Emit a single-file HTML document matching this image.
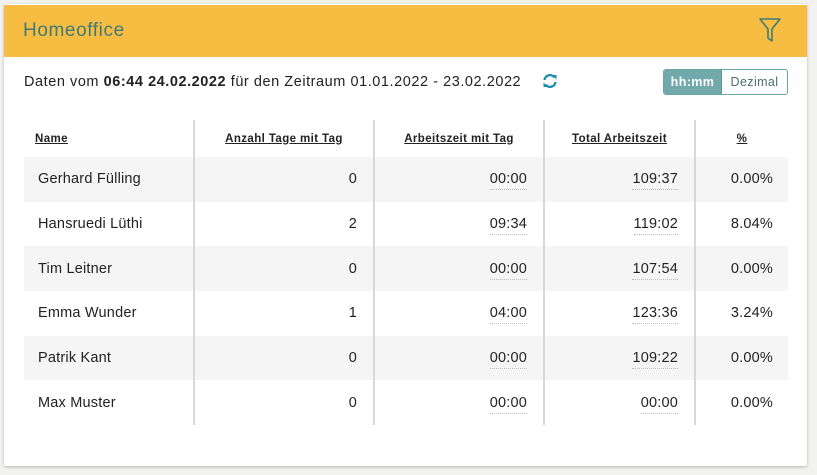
<!DOCTYPE html>
<html><head><meta charset="utf-8"><style>
*{box-sizing:border-box;margin:0;padding:0}
body{width:817px;height:475px;background:#f2f2f0;font-family:"Liberation Sans",sans-serif;color:#333;position:relative;overflow:hidden}
.card{position:absolute;left:4px;top:4px;width:803px;height:462px;background:#fff;box-shadow:0 1px 3px rgba(0,0,0,.25);border-radius:2px}
.hdr{position:absolute;left:0;top:1px;width:803px;height:52px;background:#f7bd43}
.hdr .t{position:absolute;left:19px;top:15px;font-size:19px;color:#3e7b76;letter-spacing:0.6px}
.info{position:absolute;left:20px;top:70px;font-size:14.5px;color:#222;letter-spacing:0.55px}
.tog{position:absolute;left:659px;top:65px;width:125px;height:26px;border:1px solid #6aa5a8;border-radius:3px;display:flex;font-size:12.5px;overflow:hidden;letter-spacing:0.4px}
.tog div{display:flex;align-items:center;justify-content:center}
.tog .a{width:58px;background:#72aaac;color:#fff;font-weight:bold;border-right:1px solid #5d9597}
.tog .b{flex:1;color:#4a6f70}
table{position:absolute;left:20px;top:116px;width:764px;border-collapse:collapse;font-size:14.5px}
th{height:37px;font-size:11.5px;font-weight:bold;text-decoration:underline;color:#222;text-align:center;letter-spacing:0.4px}
th:first-child{text-align:left;padding-left:11px}
td{height:44.7px;text-align:right;padding-right:16px;color:#222;letter-spacing:0.2px}
td:first-child{text-align:left;padding-left:14px}
tr:nth-child(even) td{background:#f5f5f5}
td+td,th+th{border-left:2px solid #d8d8dc}
td:nth-child(5){padding-right:15px}
.u{border-bottom:1px dotted #bbb;padding-bottom:2px}
</style></head><body>
<div class="card">
<div class="hdr"><div class="t">Homeoffice</div>
<svg style="position:absolute;left:754px;top:12px" width="24" height="26" viewBox="0 0 24 26"><path d="M2 2H22L14 12V24L10 21V12Z" fill="none" stroke="#3e7b76" stroke-width="1.6" stroke-linejoin="round"/></svg></div>
<div class="info">Daten vom <b>06:44 24.02.2022</b> für den Zeitraum 01.01.2022 - 23.02.2022</div>
<svg style="position:absolute;left:538px;top:69px" width="16" height="16" viewBox="0 0 16 16"><path d="M2.5 7A5.5 5.5 0 0 1 12.5 4.5M13.5 9A5.5 5.5 0 0 1 3.5 11.5" fill="none" stroke="#1f8fb0" stroke-width="2.4"/><path d="M10 2L14.5 2L14.5 6.5Z M6 14L1.5 14L1.5 9.5Z" fill="#1f8fb0"/></svg>
<div class="tog"><div class="a">hh:mm</div><div class="b">Dezimal</div></div>
<table>
<tr><th style="width:170px">Name</th><th style="width:180px">Anzahl Tage mit Tag</th><th style="width:170px">Arbeitszeit mit Tag</th><th style="width:151px">Total Arbeitszeit</th><th>%</th></tr>
<tr><td>Gerhard Fülling</td><td>0</td><td><span class="u">00:00</span></td><td><span class="u">109:37</span></td><td>0.00%</td></tr>
<tr><td>Hansruedi Lüthi</td><td>2</td><td><span class="u">09:34</span></td><td><span class="u">119:02</span></td><td>8.04%</td></tr>
<tr><td>Tim Leitner</td><td>0</td><td><span class="u">00:00</span></td><td><span class="u">107:54</span></td><td>0.00%</td></tr>
<tr><td>Emma Wunder</td><td>1</td><td><span class="u">04:00</span></td><td><span class="u">123:36</span></td><td>3.24%</td></tr>
<tr><td>Patrik Kant</td><td>0</td><td><span class="u">00:00</span></td><td><span class="u">109:22</span></td><td>0.00%</td></tr>
<tr><td>Max Muster</td><td>0</td><td><span class="u">00:00</span></td><td><span class="u">00:00</span></td><td>0.00%</td></tr>
</table>
</div>
</body></html>
